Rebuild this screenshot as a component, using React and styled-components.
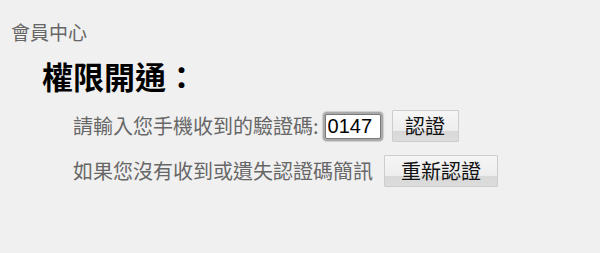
import React, { useState } from 'react';
import styled, { createGlobalStyle } from 'styled-components';

const GlobalStyle = createGlobalStyle`
  html, body {
    margin: 0;
    padding: 0;
    background: #f0f0f0;
  }
  body {
    font-family: "Noto Sans CJK TC", "Noto Sans", sans-serif;
  }
`;

const Page = styled.div`
  width: 600px;
  height: 253px;
  box-sizing: border-box;
  padding: 19px 0 0 11px;
  background: #f0f0f0;
`;

const SectionLabel = styled.div`
  font-size: 19px;
  line-height: 26px;
  color: #666;
`;

const Content = styled.div`
  padding-left: 31px;
  margin-top: 11px;
`;

const Title = styled.h2`
  margin: 0;
  font-size: 31px;
  line-height: 40px;
  font-weight: 700;
  color: #000;
`;

const Rows = styled.div`
  display: flex;
  flex-direction: column;
  gap: 13px;
  margin-top: 14px;
  padding-left: 62px;
`;

const Row = styled.div`
  display: flex;
  align-items: center;
  height: 32px;
`;

const Label = styled.span`
  font-size: 20px;
  line-height: 28px;
  color: #676767;
`;

const CodeInput = styled.input`
  box-sizing: border-box;
  width: 56px;
  height: 25px;
  margin-left: 6px;
  padding: 0 2px;
  border: 1px solid #7a7a7a;
  border-radius: 2px;
  box-shadow: 0 0 0 2px #a9a9a9, 0 0 1px 3px #cfcfcf;
  background: #fff;
  font-family: "Liberation Sans", Arial, sans-serif;
  font-size: 20px;
  color: #000;
  outline: none;
`;

const Button = styled.button`
  box-sizing: border-box;
  height: 32px;
  min-width: ${(p) => p.$width}px;
  margin-left: ${(p) => p.$gap}px;
  padding: 0 12px;
  border: 1px solid #cdcdcd;
  border-radius: 1px;
  background: linear-gradient(#f6f6f6 0%, #ededed 65%, #d8d8d8 66%, #dcdcdc 100%);
  font-family: "Noto Sans CJK TC", "Noto Sans", sans-serif;
  font-size: 20px;
  line-height: 28px;
  color: #111;
  cursor: pointer;
`;

export default function App() {
  const [code, setCode] = useState('0147');

  return (
    <>
      <GlobalStyle />
      <Page>
        <SectionLabel>會員中心</SectionLabel>
        <Content>
          <Title>權限開通：</Title>
        </Content>
        <Rows>
          <Row>
            <Label>請輸入您手機收到的驗證碼:</Label>
            <CodeInput value={code} onChange={(e) => setCode(e.target.value)} />
            <Button $width={67} $gap={11}>認證</Button>
          </Row>
          <Row>
            <Label>如果您沒有收到或遺失認證碼簡訊</Label>
            <Button $width={114} $gap={11}>重新認證</Button>
          </Row>
        </Rows>
      </Page>
    </>
  );
}
